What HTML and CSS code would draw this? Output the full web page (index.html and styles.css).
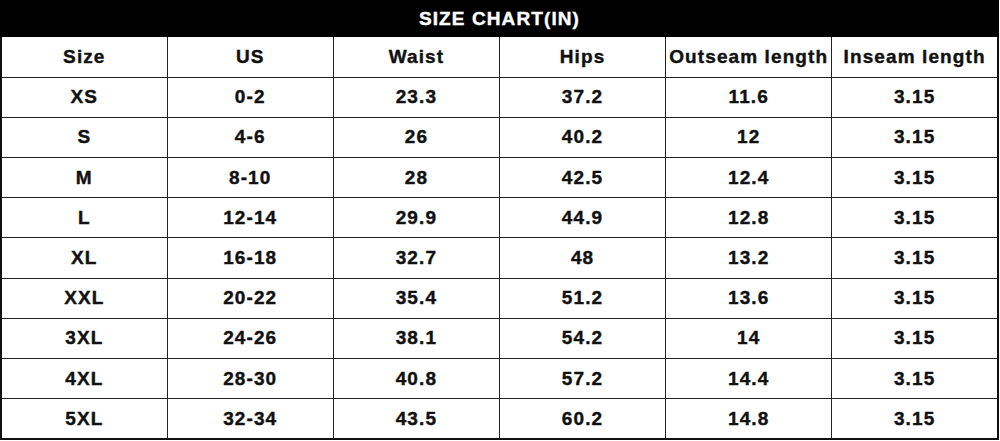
FILE: index.html
```html
<!DOCTYPE html>
<html>
<head>
<meta charset="utf-8">
<link rel="stylesheet" href="styles.css">
</head>
<body>
<div class="chart">
  <div class="title">SIZE CHART(IN)</div>
  <table class="grid">
    <tr class="head"><td>Size</td><td>US</td><td>Waist</td><td>Hips</td><td>Outseam length</td><td>Inseam length</td></tr>
    <tr><td>XS</td><td>0-2</td><td>23.3</td><td>37.2</td><td>11.6</td><td>3.15</td></tr>
    <tr><td>S</td><td>4-6</td><td>26</td><td>40.2</td><td>12</td><td>3.15</td></tr>
    <tr><td>M</td><td>8-10</td><td>28</td><td>42.5</td><td>12.4</td><td>3.15</td></tr>
    <tr><td>L</td><td>12-14</td><td>29.9</td><td>44.9</td><td>12.8</td><td>3.15</td></tr>
    <tr><td>XL</td><td>16-18</td><td>32.7</td><td>48</td><td>13.2</td><td>3.15</td></tr>
    <tr><td>XXL</td><td>20-22</td><td>35.4</td><td>51.2</td><td>13.6</td><td>3.15</td></tr>
    <tr><td>3XL</td><td>24-26</td><td>38.1</td><td>54.2</td><td>14</td><td>3.15</td></tr>
    <tr><td>4XL</td><td>28-30</td><td>40.8</td><td>57.2</td><td>14.4</td><td>3.15</td></tr>
    <tr><td>5XL</td><td>32-34</td><td>43.5</td><td>60.2</td><td>14.8</td><td>3.15</td></tr>
  </table>
</div>
</body>
</html>
```
FILE: styles.css
```css
html, body {
  margin: 0;
  padding: 0;
  background: #fff;
}
.chart {
  width: 999px;
  font-family: "Liberation Sans", Arial, sans-serif;
  font-weight: bold;
  color: #111;
}
.title {
  height: 37px;
  background: #000;
  color: #fff;
  font-size: 19px;
  letter-spacing: 1.1px;
  -webkit-text-stroke: 0.4px #fff;
  display: flex;
  align-items: center;
  justify-content: center;
}
.grid {
  width: 999px;
  border-collapse: collapse;
  table-layout: fixed;
  border: 2px solid #111;
  border-top: none;
}
.grid tr {
  height: 40.2px;
}
.grid td {
  padding: 0;
  border: 1px solid #222;
  text-align: center;
  vertical-align: middle;
  font-size: 19px;
  letter-spacing: 1.1px;
  -webkit-text-stroke: 0.4px #111;
  white-space: nowrap;
}
.grid tr:first-child td {
  border-top: none;
}
```
